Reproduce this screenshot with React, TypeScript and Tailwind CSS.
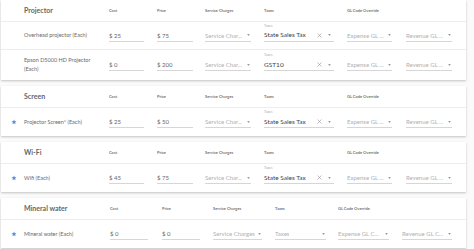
import React from "react";

type Item = {
  name: string;
  starred?: boolean;
  cost: string;
  price: string;
  tax?: string;
};

type Group = {
  title: string;
  wide?: boolean;
  items: Item[];
};

const groups: Group[] = [
  {
    title: "Projector",
    items: [
      { name: "Overhead projector (Each)", cost: "25", price: "75", tax: "State Sales Tax" },
      { name: "Epson D5000 HD Projector (Each)", cost: "0", price: "200", tax: "GST10" },
    ],
  },
  {
    title: "Screen",
    items: [{ name: "Projector Screen* (Each)", starred: true, cost: "25", price: "50", tax: "State Sales Tax" }],
  },
  {
    title: "Wi-Fi",
    items: [{ name: "Wifi (Each)", starred: true, cost: "45", price: "75", tax: "State Sales Tax" }],
  },
  {
    title: "Mineral water",
    wide: true,
    items: [{ name: "Mineral water (Each)", starred: true, cost: "0", price: "0" }],
  },
];

// column widths: star, name, cost, price, service, taxes, expense
const narrowCols = ["w-[23px]", "w-[85px]", "w-[48px]", "w-[48px]", "w-[59px]", "w-[83px]", "w-[59px]"];
const wideCols = ["w-[23px]", "w-[86px]", "w-[52px]", "w-[51px]", "w-[62px]", "w-[63px]", "w-[64px]"];

function Caret() {
  return (
    <svg width="3" height="2" viewBox="0 0 4 3" className="shrink-0">
      <path d="M0 0.3 L4 0.3 L2 2.6 Z" fill="#777" />
    </svg>
  );
}

function Star() {
  return (
    <svg width="6" height="6" viewBox="0 0 24 24">
      <path
        d="M12 2l2.9 6.6 7.1.6-5.4 4.7 1.6 7-6.2-3.7-6.2 3.7 1.6-7L2 9.2l7.1-.6z"
        fill="#5a86d6"
      />
    </svg>
  );
}

function Underline({ className, children }: { className: string; children: React.ReactNode }) {
  return (
    <div className={`flex h-[12px] items-center border-b border-[#d6d6d6] ${className}`}>{children}</div>
  );
}

function Select({ width, text }: { width: string; text: string }) {
  return (
    <Underline className={`${width} justify-between pr-[1px]`}>
      <span className="truncate text-[6px] text-[#b0b0b0]">{text}</span>
      <Caret />
    </Underline>
  );
}

function Row({ item, wide, last }: { item: Item; wide?: boolean; last: boolean }) {
  const c = wide ? wideCols : narrowCols;
  return (
    <div className={`flex items-center ${item.name.startsWith("Epson") ? "h-[30px]" : "h-[28px]"} ${last ? "" : "border-b border-[#ededed]"}`}>
      <div className={`${c[0]} flex shrink-0 justify-center pl-[2px]`}>{item.starred && <Star />}</div>
      <div className={`${c[1]} shrink-0`}>
        <div className="max-w-[70px] text-[5.5px] leading-[9px] text-[#6a6a6a]">{item.name}</div>
      </div>
      <div className={`${c[2]} shrink-0`}>
        <Underline className={wide ? "w-[38px]" : "w-[35px]"}>
          <span className="text-[6px] text-[#666]">$ {item.cost}</span>
        </Underline>
      </div>
      <div className={`${c[3]} shrink-0`}>
        <Underline className={wide ? "w-[38px]" : "w-[36px]"}>
          <span className="text-[6px] text-[#666]">$ {item.price}</span>
        </Underline>
      </div>
      <div className={`${c[4]} shrink-0`}>
        {wide ? (
          <Select width="w-[49px]" text="Service Charges" />
        ) : (
          <Select width="w-[46px]" text="Service Char..." />
        )}
      </div>
      <div className={`${c[5]} shrink-0`}>
        {item.tax ? (
          <div className="relative w-[70px]">
            <span className="absolute -top-[5px] left-0 text-[3.5px] leading-none text-[#aaa]">Taxes</span>
            <Underline className="w-[70px] justify-between pr-[3px]">
              <span className="text-[6.5px] text-[#444]">{item.tax}</span>
              <span className="flex items-center gap-[6px]">
                <svg width="5" height="5" viewBox="0 0 10 10">
                  <path d="M1 1 L9 9 M9 1 L1 9" stroke="#777" strokeWidth="0.9" />
                </svg>
                <Caret />
              </span>
            </Underline>
          </div>
        ) : (
          <Select width="w-[51px]" text="Taxes" />
        )}
      </div>
      <div className={`${c[6]} shrink-0`}>
        <Select width={wide ? "w-[51px]" : "w-[45px]"} text={wide ? "Expense GL C..." : "Expense GL ..."} />
      </div>
      <div className="shrink-0">
        <Select width={wide ? "w-[50px]" : "w-[46px]"} text={wide ? "Revenue GL C..." : "Revenue GL ..."} />
      </div>
    </div>
  );
}

function Card({ group }: { group: Group }) {
  const c = group.wide ? wideCols : narrowCols;
  const label = "shrink-0 text-[4px] font-bold text-[#777]";
  return (
    <div className="w-[465px] bg-white shadow-[0_1px_2px_rgba(0,0,0,0.22)]">
      <div className="flex h-[22px] items-center border-b border-[#ededed]">
        <div className={`${c[0]} shrink-0`} />
        <div className={`${c[1]} shrink-0 text-[7px] font-bold text-[#666]`}>{group.title}</div>
        <div className={`${c[2]} ${label}`}>Cost</div>
        <div className={`${c[3]} ${label}`}>Price</div>
        <div className={`${c[4]} ${label}`}>Service Charges</div>
        <div className={`${c[5]} ${label}`}>Taxes</div>
        <div className={label}>GL Code Override</div>
      </div>
      {group.items.map((item, i) => (
        <Row key={item.name} item={item} wide={group.wide} last={i === group.items.length - 1} />
      ))}
    </div>
  );
}

export default function App() {
  return (
    <div
      className="flex h-[249px] w-[474px] flex-col gap-[6px] overflow-hidden bg-[#fafafa] pl-[1px]"
      style={{ fontFamily: "Lato, 'Open Sans', sans-serif" }}
    >
      {groups.map((g) => (
        <Card key={g.title} group={g} />
      ))}
    </div>
  );
}
